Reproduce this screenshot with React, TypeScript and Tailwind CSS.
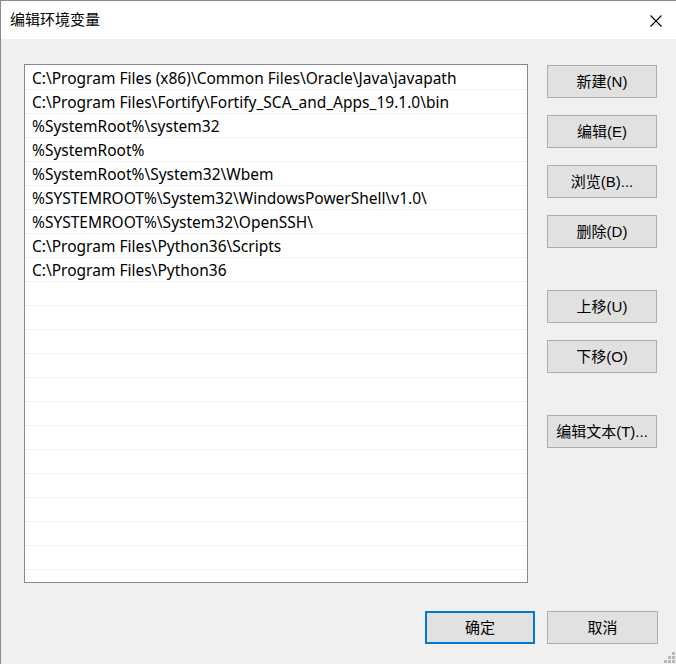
import React from "react";

const PATHS = [
  "C:\\Program Files (x86)\\Common Files\\Oracle\\Java\\javapath",
  "C:\\Program Files\\Fortify\\Fortify_SCA_and_Apps_19.1.0\\bin",
  "%SystemRoot%\\system32",
  "%SystemRoot%",
  "%SystemRoot%\\System32\\Wbem",
  "%SYSTEMROOT%\\System32\\WindowsPowerShell\\v1.0\\",
  "%SYSTEMROOT%\\System32\\OpenSSH\\",
  "C:\\Program Files\\Python36\\Scripts",
  "C:\\Program Files\\Python36",
];

const ROWS = 22;

const font = "font-['Segoe_UI','Liberation_Sans','Noto_Sans_CJK_SC',sans-serif]";
const listFont = "font-['Noto_Sans','Noto_Sans_CJK_SC',sans-serif]";

function WinButton({ label, primary, className = "" }: { label: string; primary?: boolean; className?: string }) {
  return (
    <button
      className={
        "h-[33px] w-[110px] bg-[#e1e1e1] text-[15px] text-black leading-none flex items-center justify-center " +
        (primary ? "border-2 border-[#0078d7] " : "border border-[#adadad] ") +
        className
      }
    >
      {label}
    </button>
  );
}

export default function App() {
  return (
    <div className={`w-[676px] h-[664px] bg-[#f0f0f0] border-l border-t border-[#8a8a8a] relative overflow-hidden ${font}`}>
      {/* Title bar */}
      <div className="h-[38px] bg-white flex items-center justify-between pl-[9px] pr-[14px]">
        <span className="text-[15px] text-black">编辑环境变量</span>
        <svg width="12" height="12" viewBox="0 0 12 12" className="mt-[1px]">
          <path d="M0.5 0.5 L11.5 11.5 M11.5 0.5 L0.5 11.5" stroke="#000" strokeWidth="1.1" />
        </svg>
      </div>

      {/* Body */}
      <div className="flex pl-[23px] pt-[25px]">
        <div className={`w-[504px] h-[519px] bg-white border border-[#828790] pt-[1px] overflow-hidden ${listFont}`}>
          {Array.from({ length: ROWS }).map((_, i) => (
            <div
              key={i}
              className="h-[24px] border-b border-[#f0f0f0] pl-[7px] flex items-center text-[15.5px] text-black whitespace-nowrap"
            >
              <span className="mt-[2px] leading-none">{PATHS[i] ?? ""}</span>
            </div>
          ))}
        </div>

        <div className="ml-[19px] pt-[1px] flex flex-col">
          <WinButton label="新建(N)" />
          <WinButton label="编辑(E)" className="mt-[17px]" />
          <WinButton label="浏览(B)..." className="mt-[17px]" />
          <WinButton label="删除(D)" className="mt-[17px]" />
          <WinButton label="上移(U)" className="mt-[42px]" />
          <WinButton label="下移(O)" className="mt-[17px]" />
          <WinButton label="编辑文本(T)..." className="mt-[42px]" />
        </div>
      </div>

      {/* Footer */}
      <div className="flex justify-end gap-[12px] pr-[18px] mt-[28px]">
        <WinButton label="确定" primary className="h-[32px]" />
        <WinButton label="取消" className="w-[111px] h-[32px]" />
      </div>

      {/* Size grip */}
      <svg width="12" height="12" viewBox="0 0 12 12" className="absolute right-[0px] bottom-[0px]">
        <rect x="8" y="0" width="3" height="3" fill="#b8b8b8" />
        <rect x="4" y="4" width="3" height="3" fill="#b8b8b8" />
        <rect x="8" y="4" width="3" height="3" fill="#b8b8b8" />
        <rect x="0" y="8" width="3" height="3" fill="#b8b8b8" />
        <rect x="4" y="8" width="3" height="3" fill="#b8b8b8" />
        <rect x="8" y="8" width="3" height="3" fill="#b8b8b8" />
      </svg>
    </div>
  );
}
